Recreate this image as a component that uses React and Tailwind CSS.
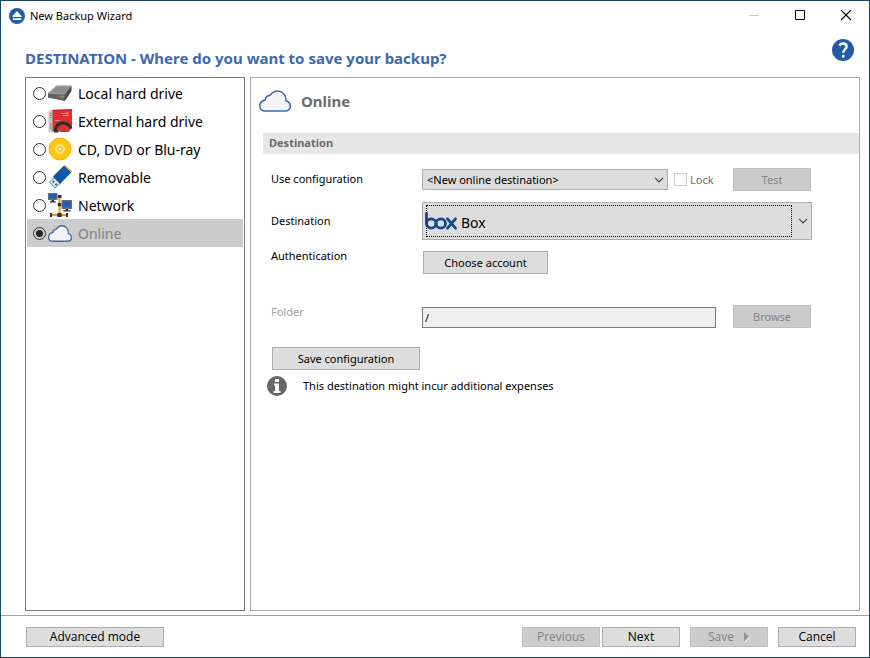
import React, { useState } from "react";

function CloudIcon({ className, strokeWidth = 1.5 }) {
  return (
    <svg viewBox="0 0 32 22" preserveAspectRatio="none" className={className} aria-hidden="true">
      <path
        d="M6.500 21h19.500c3.200 0 5.300-2 5.300-5 0-2.600-1.500-4.300-4.300-5.200C27.300 5 23.500 1 18.500 1c-3.500 0-5.500 1.500-7.500 4.300-2.700.3-4.500 2-4.800 4.700C2.800 10.700.8 12.800.8 15.700.8 19 3 21 6.500 21z"
        fill="#f5f5f5"
        stroke="#3d68ae"
        strokeWidth={strokeWidth}
      />
    </svg>
  );
}

function DriveIcon() {
  return (
    <svg viewBox="0 0 24 24" className="size-6" aria-hidden="true">
      <path d="M0 12 8.500 4.500h15L17 13z" fill="#8f8f8f" />
      <path d="M0 12 17 13v7L0 16.800z" fill="#626262" />
      <path d="M17 13l6.500-8.500V10L17 20z" fill="#4b4b4b" />
      <path d="M1 12 9 5h14" fill="none" stroke="#b0b0b0" strokeWidth=".8" />
      <path d="M.5 12.300 17 13.300" stroke="#a5a5a5" strokeWidth=".7" />
      <rect x="10.500" y="14.500" width="2" height="2" fill="#e8503c" />
      <rect x="13.500" y="14.800" width="2" height="2" fill="#58cc4e" />
    </svg>
  );
}

function ExternalIcon() {
  return (
    <svg viewBox="0 0 24 24" className="size-6" aria-hidden="true">
      <path d="M.5 1.500 5 1v22.500l-4.500-1z" fill="#c4c4c4" />
      <path d="M1.800 4.500h2M1.800 6.500h2M1.800 8.500h2M2.800 14v6" stroke="#7d7d7d" strokeWidth=".8" />
      <path d="M4.500 1 24 .3V20L9 22.500H4.500z" fill="#dc3030" />
      <path d="M4.500 1.300 24 .6" stroke="#a32626" strokeWidth=".8" />
      <path d="M13 4.500l8-.4M15 6.500l6-.3M7.500 11.500h4" stroke="#f3b0aa" strokeWidth=".8" />
      <path d="M12 23c0-4 2-6 5-6 2.200 0 4 1.200 5.500 3.500L21 23z" fill="#c93a36" />
      <path d="M7 22.500c.5-5.500 3.300-8.500 7.800-8.500 3.700 0 6.200 1.800 8.200 5" fill="none" stroke="#2e2e2e" strokeWidth="3" />
      <path d="M6 22.500h4.500" stroke="#2e2e2e" strokeWidth="2" />
    </svg>
  );
}

function DiscIcon() {
  return (
    <svg viewBox="0 0 24 24" className="size-6" aria-hidden="true">
      <circle cx="12" cy="12" r="11" fill="#ffc90b" stroke="#ffa52b" strokeWidth="1" />
      <circle cx="12" cy="12" r="4.300" fill="#ffd45c" stroke="#fff3cf" strokeWidth="1" />
      <circle cx="12" cy="12" r="1.900" fill="#fff" stroke="#f3a52d" strokeWidth=".9" />
    </svg>
  );
}

function UsbIcon() {
  return (
    <svg viewBox="0 0 24 24" className="size-6" aria-hidden="true">
      <path d="M1.500 17 6 12.500l6 6L7 23z" fill="#e3edf6" stroke="#4d8bc4" strokeWidth="1" />
      <path d="M5 11.500 16 .5l7.500 6.700L12 19z" fill="#0a5aa6" />
      <path d="M15.800.5 17 0l7 6-.8 1.600z" fill="#ff9a21" />
      <path d="M4 16.800l1.500-1.500L7 16.800l-1.500 1.500zM6.600 19.600l1.500-1.500 1.500 1.500-1.500 1.500z" fill="#5a6570" />
    </svg>
  );
}

function NetworkIcon() {
  return (
    <svg viewBox="0 0 24 24" className="size-6" aria-hidden="true">
      <path d="M11.500 3.500v18M3 22h16M9 3.500h3M11 11.500h4" stroke="#f4932d" strokeWidth="2" fill="none" />
      <path d="M10 2h3.500v3H10zM9.800 10h3.400v3.200H9.800zM9.300 20h4.400v4H9.300zM2 20h2v4H2zM18 20h2v4h-2z" fill="#343434" />
      <path d="M0 0h9.500v7H0zM13.500 7h10.500v9H13.500z" fill="#5e7088" />
      <path d="M1.200 1.200h7.100v4.600H1.200zM14.800 8.300h8v6.200h-8z" fill="#1f5fae" />
      <path d="M3.500 7h2.500v1.300h1.800V9.500H1.800V8.300h1.700zM17.500 16h2.700v1.200h2.300v1.300h-7.200v-1.300h2.200z" fill="#343434" />
    </svg>
  );
}

function Chevron() {
  return (
    <svg viewBox="0 0 9 6" className="h-1.5 w-2.5" aria-hidden="true">
      <path d="M.5.8 4.500 4.800 8.500.8" fill="none" stroke="#444" strokeWidth="1.200" />
    </svg>
  );
}

function Button({ className = "", ...props }) {
  return (
    <button
      type="button"
      className={`flex items-center justify-center border border-[#adadad] bg-[#dddddd] text-black disabled:border-[#bfbfbf] disabled:bg-[#cccccc] disabled:text-[#838383] ${className}`}
      {...props}
    />
  );
}

const places = [
  ["Local hard drive", DriveIcon],
  ["External hard drive", ExternalIcon],
  ["CD, DVD or Blu-ray", DiscIcon],
  ["Removable", UsbIcon],
  ["Network", NetworkIcon],
  ["Online", () => <CloudIcon className="h-[17px] w-6" strokeWidth={1.700} />],
];

export default function App() {
  const [place, setPlace] = useState("Online");

  return (
    <div className="flex min-h-screen flex-col border border-[#1d4a63] bg-white font-['Noto_Sans','Open_Sans',sans-serif] text-[11px] leading-4 text-black">
      <header className="flex h-[30px] items-center pr-[11px] pl-2">
        <svg viewBox="0 0 16 16" className="size-4" aria-hidden="true">
          <circle cx="8" cy="8" r="8" fill="#225ca8" />
          <path d="M8 3 12.500 8v1h-9V8zM3.800 10.200h8.400v1.800H3.800z" fill="#fff" />
        </svg>
        <span className="ml-[5px] grow">New Backup Wizard</span>
        <div className="flex gap-[22px]">
          <button type="button" aria-label="Minimize" disabled className="flex size-6 items-center justify-center">
            <svg viewBox="0 0 12 12" className="size-3"><path d="M1 5.500h10" stroke="#c8c8c8" /></svg>
          </button>
          <button type="button" aria-label="Maximize" className="flex size-6 items-center justify-center">
            <svg viewBox="0 0 12 12" className="size-3"><path d="M1.500.5h9v9h-9z" fill="none" stroke="#000" /></svg>
          </button>
          <button type="button" aria-label="Close" className="flex size-6 items-center justify-center">
            <svg viewBox="0 0 12 12" className="size-3"><path d="M1 0l10 10M11 0 1 10" stroke="#000" strokeWidth="1.100" /></svg>
          </button>
        </div>
      </header>

      <div className="flex h-[46px] items-start justify-between pr-1 pl-6">
        <h1 className="mt-[15px] text-[15px] leading-6 font-bold text-[#3c69ad]">
          DESTINATION - Where do you want to save your backup?
        </h1>
        <button type="button" aria-label="Help" className="mt-2 mr-[11px]">
          <svg viewBox="0 0 22 22" className="size-[22px]">
            <circle cx="11" cy="11" r="11" fill="#225ca8" />
            <path d="M7.200 6.500C8.200 5.200 9.500 4.500 11 4.500c2.200 0 3.600 1.200 3.600 3 0 2.700-3.300 2.900-3.300 6.300" fill="none" stroke="#fff" strokeWidth="2.400" />
            <path d="M10 15.900h2.600v2.600H10z" fill="#fff" />
          </svg>
        </button>
      </div>

      <main className="flex grow gap-[5px] pr-[9px] pl-6">
        <fieldset className="w-[220px] shrink-0 border border-[#7a7a7a] p-px" aria-label="Backup destination">
          {places.map(([name, Icon]) => (
            <label
              key={name}
              className={`flex h-7 items-center pl-1.5 text-[14px] ${place === name ? "bg-[#cccccc] text-[#838383]" : "text-black"}`}
            >
              <input
                type="radio"
                name="place"
                checked={place === name}
                onChange={() => setPlace(name)}
                className="mr-0.5 size-[13px] appearance-none rounded-full border border-[#333] bg-white p-[2px] checked:bg-[#222] checked:bg-clip-content"
              />
              <span className="mr-1.5 flex size-6 items-center"><Icon /></span>
              <span className="pt-0.5">{name}</span>
            </label>
          ))}
        </fieldset>

        <section className="min-w-0 grow border border-[#acacac] pt-[11px]">
          <div className="flex h-6 items-center gap-2.5 pl-2">
            <CloudIcon className="h-[22px] w-8" />
            <h2 className="text-[15px] leading-6 font-bold text-[#6b6b6b]">Online</h2>
          </div>
          <h3 className="mt-5 ml-3 h-[21px] bg-[#e6e6e6] pl-1.5 leading-5 font-bold text-[#6b6b6b]">Destination</h3>

          <div className="mt-3.5 pl-5">
            <div className="flex h-[23px] items-center">
              <label htmlFor="config" className="w-[151px] shrink-0 pb-0.5">Use configuration</label>
              <div className="relative w-[246px]">
                <select id="config" className="block h-[21px] w-full appearance-none border border-[#adadad] bg-[#dddddd] pl-1">
                  <option>&lt;New online destination&gt;</option>
                </select>
                <span className="pointer-events-none absolute inset-y-0 right-1 flex items-center"><Chevron /></span>
              </div>
              <label className="ml-1.5 flex w-[59px] items-center gap-[3px] text-[#6d6d6d]">
                <input type="checkbox" disabled className="size-[13px] appearance-none border border-[#cccccc] bg-white" />
                Lock
              </label>
              <Button disabled className="h-[23px] w-[78px]">Test</Button>
            </div>

            <div className="mt-[11px] flex h-[38px] items-center">
              <label htmlFor="provider" className="w-[151px] shrink-0">Destination</label>
              <div className="relative w-[390px]">
                <select id="provider" className="block h-[38px] w-full appearance-none border border-[#adadad] bg-[#dddddd] pt-1 pl-[38px] text-[14px]">
                  <option>Box</option>
                </select>
                <span className="pointer-events-none absolute inset-y-[3px] right-5 left-1 border border-dotted border-black" />
                <svg viewBox="0 0 32 18" className="pointer-events-none absolute top-2.5 left-[3px] h-[18px] w-8" aria-hidden="true">
                  <g fill="none" stroke="#17498a" strokeWidth="2.800" strokeLinecap="round">
                    <path d="M1.500 1.500v10" />
                    <circle cx="6.200" cy="11.500" r="4.700" />
                    <circle cx="15.800" cy="11.500" r="4.700" />
                    <path d="M22.500 6.800 30.500 16.200M30.500 6.800 22.500 16.200" />
                  </g>
                </svg>
                <span className="pointer-events-none absolute inset-y-0 right-1 flex items-center"><Chevron /></span>
              </div>
            </div>

            <div className="mt-[11px] flex h-[23px]">
              <span className="-mt-[3px] w-[152px] shrink-0">Authentication</span>
              <Button className="w-[125px]">Choose account</Button>
            </div>

            <div className="mt-[31px] flex h-[23px]">
              <label htmlFor="folder" className="-mt-px w-[151px] shrink-0 text-[#a0a0a0]">Folder</label>
              <input
                id="folder"
                readOnly
                value="/"
                className="mt-0.5 mr-[17px] h-[21px] w-[294px] border border-[#7a7a7a] bg-[#eef0f0] px-0.5 outline-none"
              />
              <Button disabled className="w-[78px]">Browse</Button>
            </div>

            <Button className="mt-[19px] ml-px h-[23px] w-[148px]">Save configuration</Button>
          </div>

          <div className="mt-1.5 flex items-center gap-4 pl-4">
            <svg viewBox="0 0 20 20" className="size-5" aria-hidden="true">
              <circle cx="10" cy="10" r="10" fill="#666" />
              <path d="M8 3h4v3H8zM7 7.500h5V15h1.500v2H6.500v-2H8V9.500H7z" fill="#fff" />
            </svg>
            <p>This destination might incur additional expenses</p>
          </div>
        </section>
      </main>

      <footer className="mt-1 flex h-[42px] items-center border-t border-[#a0a0a0] pr-[13px] pl-[25px] font-['Open_Sans','Noto_Sans',sans-serif] text-[12px]">
        <Button className="mr-auto h-5 w-[138px]">Advanced mode</Button>
        <Button disabled className="mr-0.5 h-5 w-[78px]">Previous</Button>
        <Button className="mr-2.5 h-5 w-[78px]">Next</Button>
        <Button disabled className="mr-2.5 h-5 w-[78px] gap-2.5">
          Save
          <svg viewBox="0 0 6 10" className="h-2.5 w-1.5" aria-hidden="true">
            <path d="M0 0 5 5 0 10z" fill="#929292" />
            <path d="M5.500 5 .5 10" stroke="#fff" />
          </svg>
        </Button>
        <Button className="h-5 w-[78px]">Cancel</Button>
      </footer>
    </div>
  );
}
